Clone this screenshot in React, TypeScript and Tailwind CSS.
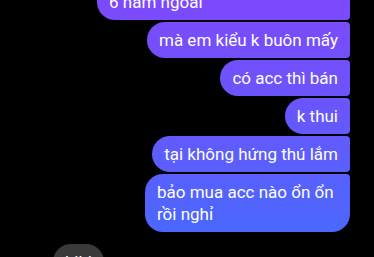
import React from 'react';

const font = { fontFamily: 'Roboto, "Noto Sans", sans-serif' };

type Msg = { text: React.ReactNode; last?: boolean; width?: string };

const mine: Msg[] = [
  { text: '6 năm ngoái', width: 'w-[253px]' },
  { text: 'mà em kiểu k buôn mấy' },
  { text: 'có acc thì bán' },
  { text: 'k thui' },
  { text: 'tại không hứng thú lắm' },
  { text: <>bảo mua acc nào ổn ổn<br />rồi nghỉ</>, last: true, width: 'w-[205px]' },
];

const Bubble: React.FC<Msg> = ({ text, last, width }) => (
  <div
    className={
      'whitespace-nowrap px-3 py-[7px] text-[17px] leading-[22px] text-white bg-fixed ' +
      'bg-[linear-gradient(to_bottom,#7d49fc_0%,#6a55fc_40%,#4a68fd_90%)] ' +
      'rounded-l-[18px] rounded-tr-[4px] ' +
      (last ? 'rounded-br-[18px] ' : 'rounded-br-[4px] ') +
      (width ?? '')
    }
  >
    {text}
  </div>
);

export default function App() {
  return (
    <div className="w-[374px] h-[257px] overflow-hidden bg-black" style={font}>
      <div className="-mt-4 flex flex-col items-end gap-[2px] pr-6">
        {mine.map((m, i) => (
          <Bubble key={i} {...m} />
        ))}
      </div>
      <div className="mt-3 pl-[53px]">
        <div className="inline-block rounded-[18px] bg-[#3a3a3c] px-3 py-[7px] text-[17px] leading-[22px] text-white">
          hihi
        </div>
      </div>
    </div>
  );
}
